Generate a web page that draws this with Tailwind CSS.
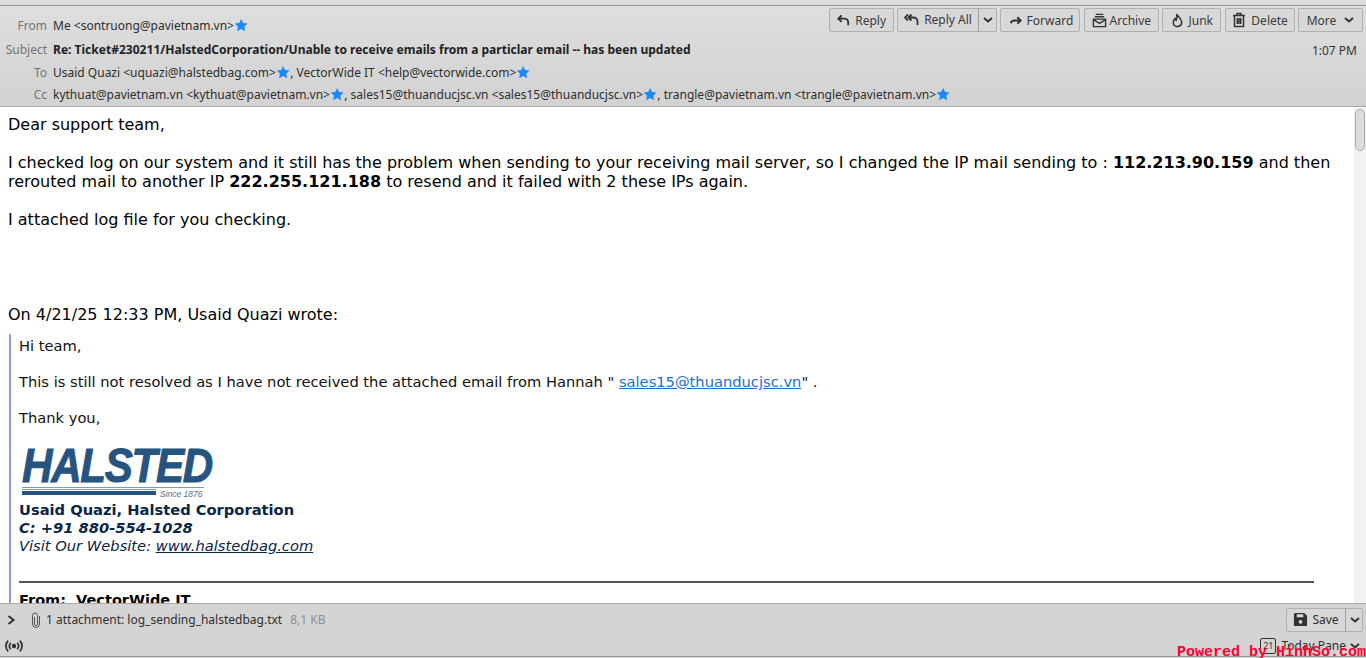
<!DOCTYPE html>
<html lang="en">
<head>
    <meta charset="UTF-8">
    <title>Re: Ticket#230211 - Thunderbird</title>
    <script src="https://cdn.jsdelivr.net/npm/@tailwindcss/browser@4"></script>
</head>
<body class="h-[658px] w-[1366px] overflow-hidden bg-[#d4d4d4] font-['Noto_Sans',sans-serif] text-[#2e2e2e]">
    <div class="relative flex h-[658px] flex-col">
        <!-- top strip -->
        <div class="h-[6px] shrink-0 border-b border-[#9a9a9a] bg-[#dcdcdc]"></div>

        <!-- message header -->
        <div class="relative h-[101px] shrink-0 border-b border-[#a8a8a8] bg-gradient-to-b from-[#dedede] to-[#d2d2d2] text-[12px] leading-[17px]">
            <div class="flex h-[28px] items-end">
                <span class="w-[47px] text-right text-[#737373]">From</span>
                <span class="ml-[6px] flex items-center">Me &lt;sontruong@pavietnam.vn&gt;
                    <svg class="size-[14.300px]" viewBox="0 0 24 24" fill="#1a88f5"><path d="M12 1.500l3.300 6.900 7.500 1-5.500 5.200 1.400 7.500L12 18.400l-6.700 3.700 1.400-7.500L1.200 9.400l7.500-1z"/></svg>
                </span>
            </div>
            <div class="mt-[7px] flex h-[17px] items-center">
                <span class="w-[47px] text-right text-[#737373]">Subject</span>
                <span class="ml-[6px] text-[12.04px] font-bold text-[#222]">Re: Ticket#230211/HalstedCorporation/Unable to receive emails from a particlar email -- has been updated</span>
            </div>
            <div class="mt-[6px] flex h-[17px] items-center">
                <span class="w-[47px] text-right text-[#737373]">To</span>
                <span class="ml-[6px] flex items-center">Usaid Quazi &lt;uquazi@halstedbag.com&gt;
                    <svg class="size-[14.300px]" viewBox="0 0 24 24" fill="#1a88f5"><path d="M12 1.500l3.300 6.900 7.500 1-5.500 5.200 1.400 7.500L12 18.400l-6.700 3.700 1.400-7.500L1.200 9.400l7.500-1z"/></svg>, VectorWide IT &lt;help@vectorwide.com&gt;
                    <svg class="size-[14.300px]" viewBox="0 0 24 24" fill="#1a88f5"><path d="M12 1.500l3.300 6.900 7.500 1-5.500 5.200 1.400 7.500L12 18.400l-6.700 3.700 1.400-7.500L1.200 9.400l7.500-1z"/></svg>
                </span>
            </div>
            <div class="mt-[5px] flex h-[17px] items-center">
                <span class="w-[47px] text-right text-[#737373]">Cc</span>
                <span class="ml-[6px] flex items-center">kythuat@pavietnam.vn &lt;kythuat@pavietnam.vn&gt;
                    <svg class="size-[14.300px]" viewBox="0 0 24 24" fill="#1a88f5"><path d="M12 1.500l3.300 6.900 7.500 1-5.500 5.200 1.400 7.500L12 18.400l-6.700 3.700 1.400-7.500L1.200 9.400l7.500-1z"/></svg>, sales15@thuanducjsc.vn &lt;sales15@thuanducjsc.vn&gt;
                    <svg class="size-[14.300px]" viewBox="0 0 24 24" fill="#1a88f5"><path d="M12 1.500l3.300 6.900 7.500 1-5.500 5.200 1.400 7.500L12 18.400l-6.700 3.700 1.400-7.500L1.200 9.400l7.500-1z"/></svg>, trangle@pavietnam.vn &lt;trangle@pavietnam.vn&gt;
                    <svg class="size-[14.300px]" viewBox="0 0 24 24" fill="#1a88f5"><path d="M12 1.500l3.300 6.900 7.500 1-5.500 5.200 1.400 7.500L12 18.400l-6.700 3.700 1.400-7.500L1.200 9.400l7.500-1z"/></svg>
                </span>
            </div>

            <!-- toolbar buttons -->
            <div class="absolute right-[3px] top-[2px] flex gap-[3.400px] text-[12px] text-[#3a3a3a]">
                <button class="flex h-[24px] w-[65px] items-center justify-center gap-[4px] rounded-[2px] border border-[#b0b0b0] bg-[#d8d8d8]">
                    <svg class="size-[15px]" viewBox="0 0 16 16" fill="none" stroke="#333" stroke-width="2"><path d="M6 2.500L2.500 6 6 9.500M3 6h6a4 4 0 0 1 4 4v3"/></svg>Reply
                </button>
                <div class="flex h-[24px] w-[100px] items-center rounded-[2px] border border-[#b0b0b0] bg-[#d8d8d8]">
                    <span class="flex w-[81px] items-center justify-center gap-[4px] border-r border-[#a0a0a0] leading-[22px]">
                        <svg class="size-[16px]" viewBox="0 0 16 16" fill="none" stroke="#333" stroke-width="1.800"><path d="M4 2.500L1 5.500l3 3M7.500 2.500L4.500 5.500l3 3M5 5.500h4.500a4 4 0 0 1 4 4V13"/></svg>Reply All
                    </span>
                    <svg class="ml-[4px] size-[10px]" viewBox="0 0 10 10" fill="none" stroke="#333" stroke-width="2"><path d="M1 3l4 3.500L9 3"/></svg>
                </div>
                <button class="flex h-[24px] w-[80px] items-center justify-center gap-[4px] rounded-[2px] border border-[#b0b0b0] bg-[#d8d8d8]">
                    <svg class="size-[15px]" viewBox="0 0 16 16" fill="none" stroke="#333" stroke-width="2"><path d="M10 4.500l3.500 3.500L10 11.500M13 8H7a4 4 0 0 0-4 3"/></svg>Forward
                </button>
                <button class="flex h-[24px] w-[75px] items-center justify-center gap-[3px] rounded-[2px] border border-[#b0b0b0] bg-[#d8d8d8]">
                    <svg class="size-[15px]" viewBox="0 0 16 16" fill="none" stroke="#333" stroke-width="1.500"><path d="M4 1.500h8M3 4h10M1.500 6.500h13v8h-13zM1.500 7l6.500 4 6.500-4"/></svg>Archive
                </button>
                <button class="flex h-[24px] w-[59px] items-center justify-center gap-[3px] rounded-[2px] border border-[#b0b0b0] bg-[#d8d8d8]">
                    <svg class="size-[15px]" viewBox="0 0 16 16" fill="none" stroke="#333" stroke-width="1.700"><path d="M7 1c1 2.500 5.500 4.500 5.500 9a4.500 4.500 0 0 1-9 0c0-2 .8-3 1.800-4 .2 1 .7 1.500 1.200 1.800C7.500 6 8 3.500 7 1z"/></svg>Junk
                </button>
                <button class="flex h-[24px] w-[70px] items-center justify-center gap-[4px] rounded-[2px] border border-[#b0b0b0] bg-[#d8d8d8]">
                    <svg class="size-[16px]" viewBox="0 0 16 16" fill="none" stroke="#333" stroke-width="1.500"><path d="M2 3.500h12M6 3.500V1.500h4v2M3.500 3.500v11h9v-11M6.300 6v6M8 6v6M9.700 6v6"/></svg>Delete
                </button>
                <button class="flex h-[24px] w-[65px] items-center justify-center gap-[8px] rounded-[2px] border border-[#b0b0b0] bg-[#d8d8d8]">More
                    <svg class="size-[10px]" viewBox="0 0 10 10" fill="none" stroke="#333" stroke-width="2"><path d="M1 3l4 3.500L9 3"/></svg>
                </button>
            </div>
            <span class="absolute right-[9px] top-[36px] text-[#333]">1:07 PM</span>
        </div>

        <!-- message body -->
        <div class="relative flex h-[496px] shrink-0 overflow-hidden bg-white">
            <div class="h-[600px] w-[1354px] pl-[8px] pr-[8px] pt-[8px] font-['DejaVu_Sans',sans-serif] text-[16px] leading-[19px] text-black">
                <p class="pr-[8px]">Dear support team,</p>
                <p class="mt-[19px] pr-[8px]">I checked log on our system and it still has the problem when sending to your receiving mail server, so I changed the IP mail sending to : <b>112.213.90.159</b> and then rerouted mail to another IP <b>222.255.121.188</b> to resend and it failed with 2 these IPs again.</p>
                <p class="mt-[19px]">I attached log file for you checking.</p>
                <p class="mt-[76px]">On 4/21/25 12:33 PM, Usaid Quazi wrote:</p>
                <div class="ml-px mt-[10px] border-l-2 border-[#7fa3d4] pl-[8px] pr-[32px] pt-[3px] text-[14.68px] leading-[18px] text-[#111]">
                    <p>Hi team,</p>
                    <p class="mt-[18px]">This is still not resolved as I have not received the attached email from Hannah " <a class="text-[#1a6fd4] underline" href="#">sales15@thuanducjsc.vn</a>" .</p>
                    <p class="mt-[18px]">Thank you,</p>
                    <!-- logo -->
                    <div class="ml-[3px] mt-[18px] h-[56px] w-[195px]">
                        <div class="h-[41px] w-[220px] origin-top-left scale-x-[.86] font-['Liberation_Sans',sans-serif] text-[49px] leading-[41px] font-bold tracking-[-1.500px] text-[#27537f] italic [-webkit-text-stroke:1px_#27537f]">HALSTED</div>
                        <div class="relative mt-[1px] h-[10px]">
                            <div class="h-px w-[182px] bg-[#7f9bb8]"></div>
                            <div class="mt-px h-px w-[134px] bg-[#7f9bb8]"></div>
                            <div class="mt-px h-[4px] w-[134px] bg-[#27537f]"></div>
                            <span class="absolute left-[138px] top-[2px] font-['Liberation_Sans',sans-serif] text-[8.500px] leading-[10px] text-[#4f7295] italic">Since 1876</span>
                        </div>
                    </div>
                    <p class="font-bold text-[#0b2545]">Usaid Quazi, Halsted Corporation</p>
                    <p class="font-bold text-[#0b2545] italic">C: +91 880-554-1028</p>
                    <p class="text-[#0b2545] italic">Visit Our Website: <a class="underline" href="#">www.halstedbag.com</a></p>
                    <hr class="mt-[26px] border-t-[2px] border-[#555]">
                    <p class="mt-[8px] text-[14.500px] font-bold text-black">From: &nbsp;VectorWide IT</p>
                </div>
            </div>
            <!-- scrollbar -->
            <div class="absolute inset-y-0 right-0 w-[12px] bg-[#f2f2f2]">
                <div class="ml-px mt-[2px] h-[42px] w-[10px] rounded-[5px] border border-[#aaa] bg-[#dcdcdc]"></div>
            </div>
        </div>

        <!-- attachment bar -->
        <div class="flex h-[29px] shrink-0 items-center border-t border-[#a8a8a8] pt-[3px] text-[12px]">
            <svg class="ml-[6px] size-[10px]" viewBox="0 0 10 10" fill="none" stroke="#333" stroke-width="2"><path d="M2.500 1l5 4-5 4"/></svg>
            <svg class="ml-[12px] size-[16px]" viewBox="0 0 16 16" fill="none" stroke="#555" stroke-width="1"><path d="M6.500 5v7a1.500 1.500 0 0 0 3 0V3.500a2.500 2.500 0 0 0-5 0V12a3.500 3.500 0 0 0 7 0V4"/></svg>
            <span class="ml-[2px]">1 attachment: log_sending_halstedbag.txt</span>
            <span class="ml-[8px] text-[#8f8f8f]">8,1 KB</span>
            <div class="ml-auto mr-[3px] flex h-[24px] w-[77px] items-center rounded-[2px] border border-[#b0b0b0] bg-[#d8d8d8]">
                <span class="flex w-[59px] items-center justify-center gap-[4px] border-r border-[#a0a0a0] leading-[22px]">
                    <svg class="size-[15px]" viewBox="0 0 16 16" fill="#333"><path d="M2 1h10l3 3v11H1V2zM4 2.500v3h7v-3zM8 8.500a2 2 0 1 0 0 4 2 2 0 0 0 0-4z" fill-rule="evenodd"/></svg>Save
                </span>
                <svg class="ml-[4px] size-[10px]" viewBox="0 0 10 10" fill="none" stroke="#333" stroke-width="2"><path d="M1 3l4 3.500L9 3"/></svg>
            </div>
        </div>

        <!-- status bar -->
        <div class="flex h-[25px] shrink-0 items-center border-b border-[#9a9a9a] pt-[3px] text-[12px]">
            <svg class="ml-[5px] size-[18px]" viewBox="0 0 17 17" fill="none" stroke="#333" stroke-width="1.700"><circle cx="8.500" cy="8.500" r="1.200" fill="#333"/><path d="M5.500 5.500a4 4 0 0 0 0 6M11.500 5.500a4 4 0 0 1 0 6M3 3.500a7 7 0 0 0 0 10M14 3.500a7 7 0 0 1 0 10"/></svg>
            <div class="ml-auto mr-[6px] flex items-center">
                <span class="flex size-[16px] items-center justify-center rounded-[2px] border-[1.500px] border-[#333] text-[9px] leading-none">21</span>
                <span class="ml-[5px]">Today Pane</span>
                <svg class="ml-[4px] size-[10px]" viewBox="0 0 10 10" fill="none" stroke="#333" stroke-width="2"><path d="M1 3l4 3.500L9 3"/></svg>
            </div>
        </div>

        <!-- watermark -->
        <span class="absolute bottom-0 right-0 font-['Liberation_Mono',monospace] text-[15px] leading-[10px] font-bold text-[#ff0033]">Powered by HinhSo.com</span>
    </div>
</body>
</html>
